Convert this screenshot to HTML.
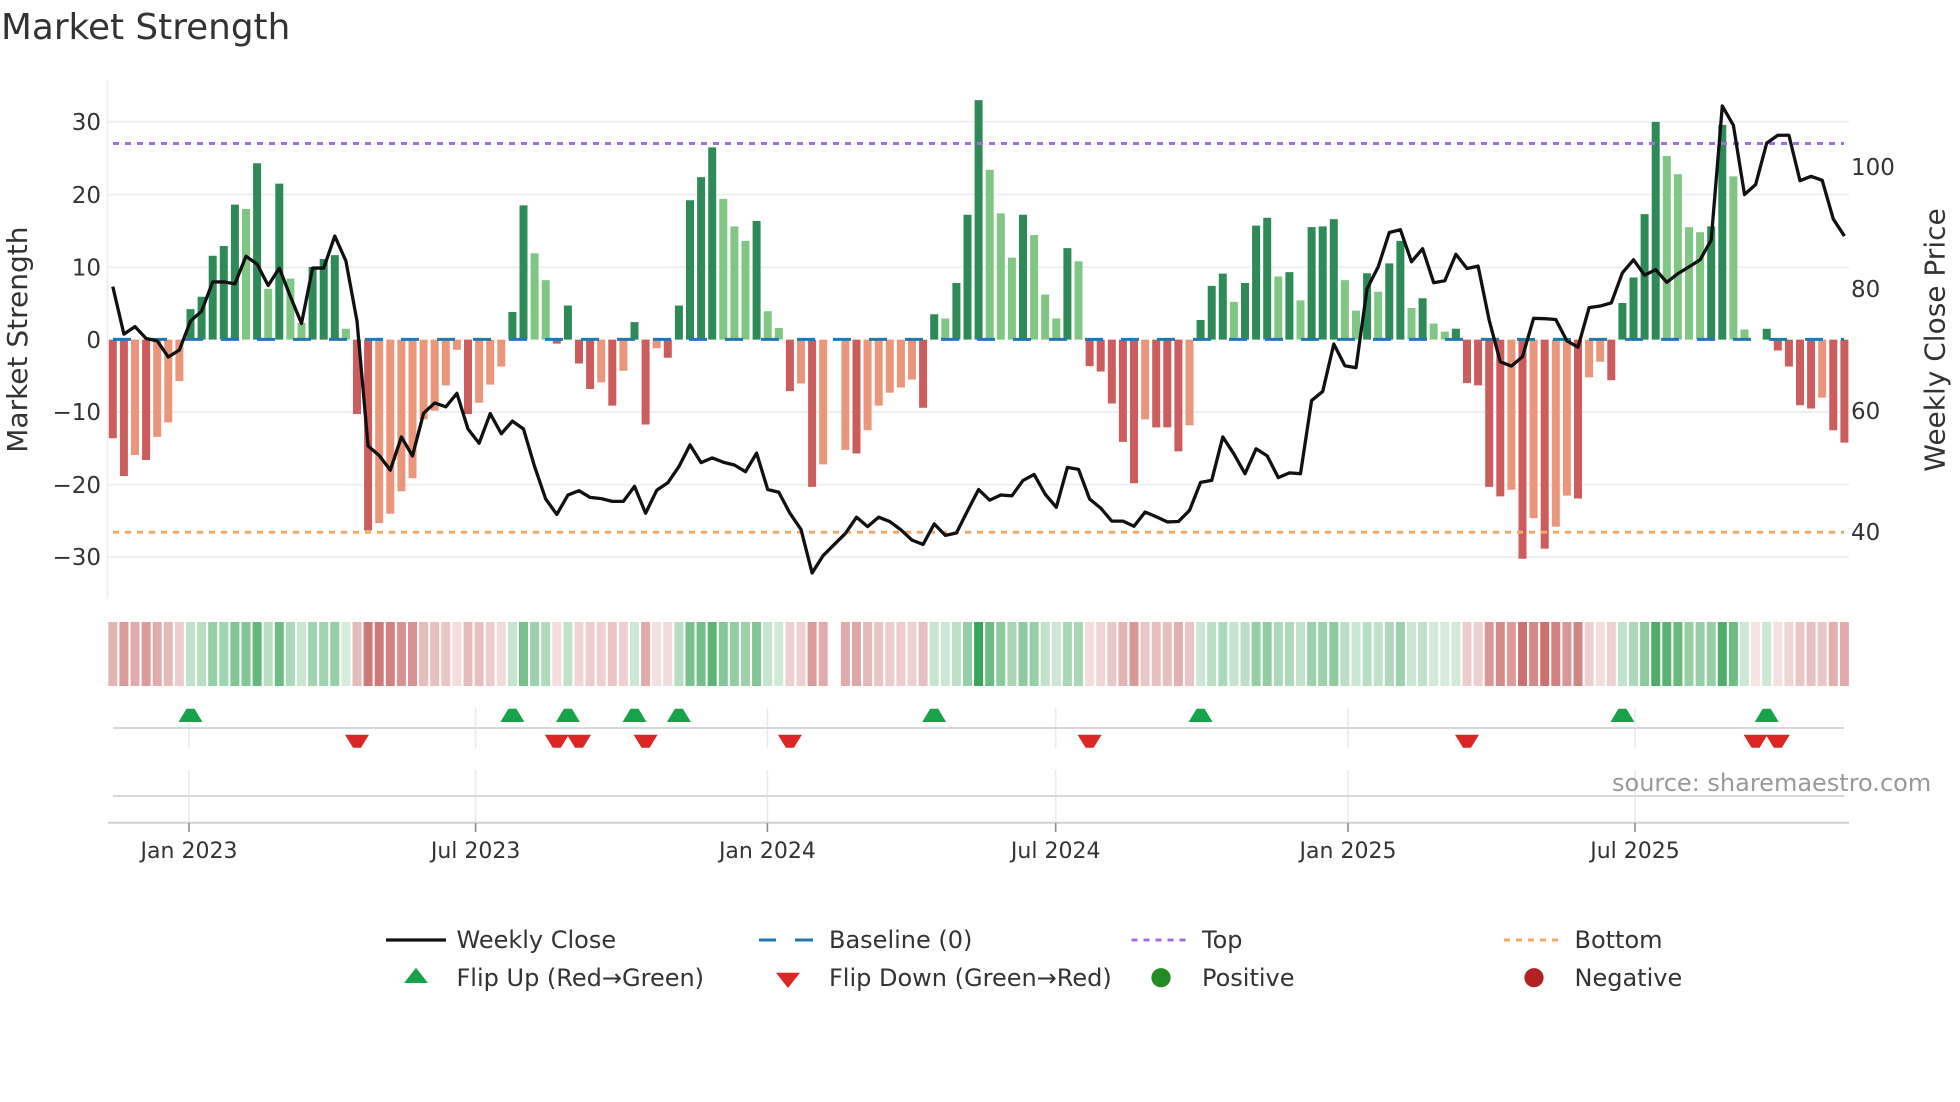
<!DOCTYPE html>
<html lang="en">
<head>
<meta charset="utf-8">
<title>Market Strength</title>
<style>
html,body{margin:0;padding:0;background:#fff;width:1960px;height:1102px;overflow:hidden}
svg{display:block;filter:blur(.35px)}
text{font-family:"DejaVu Sans","Liberation Sans",sans-serif;fill:#333}
.ns path,.ns{vector-effect:non-scaling-stroke}
.r{stroke:#bc4a46;stroke-opacity:.92;fill:none}
.g{stroke:#229a44;stroke-opacity:.94;fill:none}
.t{font-size:23px}
.x{font-size:22px;text-anchor:middle}
.l{font-size:24px}
</style>
</head>
<body>
<svg width="1960" height="1102" viewBox="0 0 1960 1102" xmlns="http://www.w3.org/2000/svg">
<rect width="1960" height="1102" fill="#fff"/>
<text x="1" y="39" style="font-size:35.8px">Market Strength</text>

<!-- main grid -->
<path d="M107.5 80V599" stroke="#eef0f3" stroke-width="2" fill="none"/>
<path d="M108 121.8H1849M108 194.5H1849M108 267.3H1849M108 412H1849M108 484.7H1849M108 557H1849" stroke="#eef0f4" stroke-width="2" fill="none"/>

<!-- bars -->
<g class="ns" transform="translate(112.8,339.6) scale(11.1,-7.256)" fill="none" stroke-width="8">
<path stroke="#2e8b57" d="M7 0V4.2M8 0V5.9M9 0V11.55M10 0V12.9M11 0V18.6M13 0V24.3M15 0V21.5M18 0V10M19 0V11.1M20 0V11.65M36 0V3.8M37 0V18.5M41 0V4.7M47 0V2.4M51 0V4.7M52 0V19.2M53 0V22.4M54 0V26.5M58 0V16.35M74 0V3.5M76 0V7.8M77 0V17.2M78 0V33M82 0V17.2M86 0V12.6M98 0V2.7M99 0V7.4M100 0V9.1M102 0V7.8M103 0V15.7M104 0V16.8M106 0V9.3M108 0V15.5M109 0V15.6M110 0V16.6M113 0V9.15M115 0V10.5M116 0V13.6M118 0V5.7M121 0V1.5M136 0V5.05M137 0V8.55M138 0V17.3M139 0V30M144 0V15.6M145 0V29.6M149 0V1.5"/>
<path stroke="#81c784" d="M12 0V18M14 0V7M16 0V8.4M17 0V2.3M21 0V1.5M38 0V11.9M39 0V8.2M55 0V19.4M56 0V15.6M57 0V13.6M59 0V3.9M60 0V1.6M75 0V2.9M79 0V23.4M80 0V17.4M81 0V11.3M83 0V14.4M84 0V6.2M85 0V2.9M87 0V10.8M101 0V5.2M105 0V8.7M107 0V5.4M111 0V8.2M112 0V4M114 0V6.6M117 0V4.35M119 0V2.2M120 0V1.1M140 0V25.3M141 0V22.8M142 0V15.5M143 0V14.8M146 0V22.5M147 0V1.4"/>
<path stroke="#cd5c5c" d="M0 0V-13.6M1 0V-18.8M3 0V-16.6M22 0V-10.25M23 0V-26.3M32 0V-10.25M40 0V-.55M42 0V-3.3M43 0V-6.8M45 0V-9.1M48 0V-11.7M50 0V-2.5M61 0V-7.1M63 0V-20.3M67 0V-15.7M73 0V-9.4M88 0V-3.65M89 0V-4.4M90 0V-8.8M91 0V-14.1M92 0V-19.8M94 0V-12.1M95 0V-12.1M96 0V-15.4M122 0V-6M123 0V-6.3M124 0V-20.3M125 0V-21.6M127 0V-30.2M129 0V-28.8M132 0V-21.9M135 0V-5.6M150 0V-1.5M151 0V-3.7M152 0V-9.05M153 0V-9.5M155 0V-12.5M156 0V-14.2"/>
<path stroke="#e9967a" d="M2 0V-15.9M4 0V-13.4M5 0V-11.4M6 0V-5.7M24 0V-25.3M25 0V-24M26 0V-20.9M27 0V-19.1M28 0V-11M29 0V-9.8M30 0V-6.3M31 0V-1.4M33 0V-8.7M34 0V-6.2M35 0V-3.7M44 0V-5.9M46 0V-4.3M49 0V-1.2M62 0V-6.05M64 0V-17.2M66 0V-15.2M68 0V-12.5M69 0V-9.1M70 0V-7.3M71 0V-6.6M72 0V-5.5M93 0V-11M97 0V-11.8M126 0V-20.7M128 0V-24.6M130 0V-25.8M131 0V-21.5M133 0V-5.2M134 0V-3.05M154 0V-8"/>
</g>

<!-- reference lines -->
<path d="M113 143.5H1844" stroke="#a36fe0" stroke-width="3" stroke-dasharray="6 6" fill="none"/>
<path d="M113 532.2H1844" stroke="#f2a868" stroke-width="3" stroke-dasharray="6 6" fill="none"/>
<path d="M113 339.4H1844" stroke="#2277ae" stroke-width="3" stroke-dasharray="18 18" fill="none"/>

<!-- price line -->
<g class="ns" transform="translate(112.8,0) scale(11.1,.3954)">
<path fill="none" stroke="#111" stroke-width="3.3" stroke-linejoin="round" d="M0 725L1 845 2 826 3 856 4 862 5 903 6 885 7 812 8 787 9 713 10 713 11 718 12 648 13 668 14 722 15 678 16 750 17 818 18 678 19 678 20 597 21 660 22 812 23 1128 24 1152 25 1189 26 1105 27 1153 28 1045 29 1019 30 1029 31 995 32 1085 33 1121 34 1046 35 1097 36 1065 37 1085 38 1180 39 1262 40 1301 41 1252 42 1241 43 1258 44 1261 45 1268 46 1268 47 1230 48 1298 49 1240 50 1221 51 1180 52 1125 53 1170 54 1158 55 1169 56 1176 57 1193 58 1146 59 1238 60 1245 61 1298 62 1339 63 1449 64 1405 65 1377 66 1349 67 1308 68 1332 69 1308 70 1319 71 1340 72 1366 73 1377 74 1325 75 1354 76 1348 77 1292 78 1238 79 1265 80 1252 81 1254 82 1215 83 1200 84 1250 85 1283 86 1182 87 1187 88 1262 89 1285 90 1318 91 1318 92 1331 93 1295 94 1307 95 1320 96 1319 97 1291 98 1220 99 1215 100 1105 101 1148 102 1198 103 1135 104 1153 105 1208 106 1196 107 1198 108 1013 109 990 110 870 111 925 112 930 113 730 114 675 115 588 116 581 117 662 118 629 119 715 120 710 121 643 122 679 123 673 124 810 125 915 126 926 127 902 128 805 129 806 130 808 131 862 132 878 133 778 134 774 135 766 136 690 137 657 138 696 139 682 140 714 141 692 142 675 143 657 144 607 145 268 146 317 147 492 148 467 149 362 150 342 151 342 152 457 153 446 154 456 155 554 156 597"/>
</g>

<!-- y ticks -->
<g class="t" text-anchor="end">
<text x="101" y="130">30</text>
<text x="101" y="203">20</text>
<text x="101" y="275.5">10</text>
<text x="101" y="348">0</text>
<text x="101" y="420">−10</text>
<text x="101" y="493">−20</text>
<text x="101" y="565">−30</text>
</g>
<g class="t">
<text x="1851" y="175">100</text>
<text x="1851" y="297">80</text>
<text x="1851" y="419">60</text>
<text x="1851" y="540">40</text>
</g>
<text transform="translate(27,339.6) rotate(-90)" text-anchor="middle" style="font-size:28px">Market Strength</text>
<text transform="translate(1944.5,340) rotate(-90)" text-anchor="middle" style="font-size:28px">Weekly Close Price</text>

<!-- heat strip -->
<g class="ns" transform="translate(112.8,622) scale(11.1,64)" stroke-width="9" fill="none">
<path class="r" opacity=".45" d="M0 0V1"/><path class="r" opacity=".6" d="M1 0V1"/><path class="r" opacity=".5" d="M2 0V1"/><path class="r" opacity=".6" d="M3 0V1"/><path class="r" opacity=".5" d="M4 0V1"/><path class="r" opacity=".42" d="M5 0V1"/><path class="r" opacity=".3" d="M6 0V1"/>
<path class="g" opacity=".3" d="M7 0V1"/><path class="g" opacity=".35" d="M8 0V1"/><path class="g" opacity=".5" d="M9 0V1"/><path class="g" opacity=".45" d="M10 0V1"/><path class="g" opacity=".6" d="M11 0V1"/><path class="g" opacity=".6" d="M12 0V1"/><path class="g" opacity=".75" d="M13 0V1"/><path class="g" opacity=".35" d="M14 0V1"/><path class="g" opacity=".7" d="M15 0V1"/><path class="g" opacity=".4" d="M16 0V1"/><path class="g" opacity=".25" d="M17 0V1"/><path class="g" opacity=".45" d="M18 0V1"/><path class="g" opacity=".45" d="M19 0V1"/><path class="g" opacity=".5" d="M20 0V1"/><path class="g" opacity=".2" d="M21 0V1"/>
<path class="r" opacity=".4" d="M22 0V1"/><path class="r" opacity=".8" d="M23 0V1"/><path class="r" opacity=".8" d="M24 0V1"/><path class="r" opacity=".75" d="M25 0V1"/><path class="r" opacity=".65" d="M26 0V1"/><path class="r" opacity=".65" d="M27 0V1"/><path class="r" opacity=".4" d="M28 0V1"/><path class="r" opacity=".38" d="M29 0V1"/><path class="r" opacity=".33" d="M30 0V1"/><path class="r" opacity=".2" d="M31 0V1"/><path class="r" opacity=".4" d="M32 0V1"/><path class="r" opacity=".38" d="M33 0V1"/><path class="r" opacity=".3" d="M34 0V1"/><path class="r" opacity=".22" d="M35 0V1"/>
<path class="g" opacity=".28" d="M36 0V1"/><path class="g" opacity=".65" d="M37 0V1"/><path class="g" opacity=".48" d="M38 0V1"/><path class="g" opacity=".38" d="M39 0V1"/><path class="r" opacity=".2" d="M40 0V1"/><path class="g" opacity=".3" d="M41 0V1"/><path class="r" opacity=".25" d="M42 0V1"/><path class="r" opacity=".3" d="M43 0V1"/><path class="r" opacity=".28" d="M44 0V1"/><path class="r" opacity=".35" d="M45 0V1"/><path class="r" opacity=".28" d="M46 0V1"/><path class="g" opacity=".24" d="M47 0V1"/><path class="r" opacity=".5" d="M48 0V1"/><path class="r" opacity=".18" d="M49 0V1"/><path class="r" opacity=".22" d="M50 0V1"/>
<path class="g" opacity=".35" d="M51 0V1"/><path class="g" opacity=".65" d="M52 0V1"/><path class="g" opacity=".68" d="M53 0V1"/><path class="g" opacity=".78" d="M54 0V1"/><path class="g" opacity=".58" d="M55 0V1"/><path class="g" opacity=".52" d="M56 0V1"/><path class="g" opacity=".48" d="M57 0V1"/><path class="g" opacity=".6" d="M58 0V1"/><path class="g" opacity=".28" d="M59 0V1"/><path class="g" opacity=".22" d="M60 0V1"/>
<path class="r" opacity=".28" d="M61 0V1"/><path class="r" opacity=".28" d="M62 0V1"/><path class="r" opacity=".6" d="M63 0V1"/><path class="r" opacity=".5" d="M64 0V1"/><path class="r" opacity=".5" d="M66 0V1"/><path class="r" opacity=".52" d="M67 0V1"/><path class="r" opacity=".42" d="M68 0V1"/><path class="r" opacity=".35" d="M69 0V1"/><path class="r" opacity=".3" d="M70 0V1"/><path class="r" opacity=".3" d="M71 0V1"/><path class="r" opacity=".28" d="M72 0V1"/><path class="r" opacity=".38" d="M73 0V1"/>
<path class="g" opacity=".28" d="M74 0V1"/><path class="g" opacity=".24" d="M75 0V1"/><path class="g" opacity=".32" d="M76 0V1"/><path class="g" opacity=".5" d="M77 0V1"/><path class="g" opacity=".95" d="M78 0V1"/><path class="g" opacity=".7" d="M79 0V1"/><path class="g" opacity=".55" d="M80 0V1"/><path class="g" opacity=".42" d="M81 0V1"/><path class="g" opacity=".55" d="M82 0V1"/><path class="g" opacity=".5" d="M83 0V1"/><path class="g" opacity=".3" d="M84 0V1"/><path class="g" opacity=".24" d="M85 0V1"/><path class="g" opacity=".42" d="M86 0V1"/><path class="g" opacity=".42" d="M87 0V1"/>
<path class="r" opacity=".2" d="M88 0V1"/><path class="r" opacity=".25" d="M89 0V1"/><path class="r" opacity=".33" d="M90 0V1"/><path class="r" opacity=".45" d="M91 0V1"/><path class="r" opacity=".62" d="M92 0V1"/><path class="r" opacity=".33" d="M93 0V1"/><path class="r" opacity=".38" d="M94 0V1"/><path class="r" opacity=".38" d="M95 0V1"/><path class="r" opacity=".48" d="M96 0V1"/><path class="r" opacity=".35" d="M97 0V1"/>
<path class="g" opacity=".24" d="M98 0V1"/><path class="g" opacity=".33" d="M99 0V1"/><path class="g" opacity=".4" d="M100 0V1"/><path class="g" opacity=".28" d="M101 0V1"/><path class="g" opacity=".33" d="M102 0V1"/><path class="g" opacity=".5" d="M103 0V1"/><path class="g" opacity=".52" d="M104 0V1"/><path class="g" opacity=".4" d="M105 0V1"/><path class="g" opacity=".4" d="M106 0V1"/><path class="g" opacity=".3" d="M107 0V1"/><path class="g" opacity=".48" d="M108 0V1"/><path class="g" opacity=".48" d="M109 0V1"/><path class="g" opacity=".55" d="M110 0V1"/><path class="g" opacity=".33" d="M111 0V1"/><path class="g" opacity=".26" d="M112 0V1"/><path class="g" opacity=".35" d="M113 0V1"/><path class="g" opacity=".3" d="M114 0V1"/><path class="g" opacity=".4" d="M115 0V1"/><path class="g" opacity=".48" d="M116 0V1"/><path class="g" opacity=".26" d="M117 0V1"/><path class="g" opacity=".3" d="M118 0V1"/><path class="g" opacity=".22" d="M119 0V1"/><path class="g" opacity=".2" d="M120 0V1"/><path class="g" opacity=".22" d="M121 0V1"/>
<path class="r" opacity=".3" d="M122 0V1"/><path class="r" opacity=".28" d="M123 0V1"/><path class="r" opacity=".62" d="M124 0V1"/><path class="r" opacity=".7" d="M125 0V1"/><path class="r" opacity=".6" d="M126 0V1"/><path class="r" opacity=".85" d="M127 0V1"/><path class="r" opacity=".7" d="M128 0V1"/><path class="r" opacity=".85" d="M129 0V1"/><path class="r" opacity=".75" d="M130 0V1"/><path class="r" opacity=".62" d="M131 0V1"/><path class="r" opacity=".72" d="M132 0V1"/><path class="r" opacity=".28" d="M133 0V1"/><path class="r" opacity=".2" d="M134 0V1"/><path class="r" opacity=".28" d="M135 0V1"/>
<path class="g" opacity=".3" d="M136 0V1"/><path class="g" opacity=".4" d="M137 0V1"/><path class="g" opacity=".55" d="M138 0V1"/><path class="g" opacity=".85" d="M139 0V1"/><path class="g" opacity=".8" d="M140 0V1"/><path class="g" opacity=".72" d="M141 0V1"/><path class="g" opacity=".5" d="M142 0V1"/><path class="g" opacity=".5" d="M143 0V1"/><path class="g" opacity=".5" d="M144 0V1"/><path class="g" opacity=".85" d="M145 0V1"/><path class="g" opacity=".7" d="M146 0V1"/><path class="g" opacity=".24" d="M147 0V1"/><path class="r" opacity=".16" d="M148 0V1"/><path class="g" opacity=".24" d="M149 0V1"/>
<path class="r" opacity=".18" d="M150 0V1"/><path class="r" opacity=".25" d="M151 0V1"/><path class="r" opacity=".35" d="M152 0V1"/><path class="r" opacity=".38" d="M153 0V1"/><path class="r" opacity=".33" d="M154 0V1"/><path class="r" opacity=".48" d="M155 0V1"/><path class="r" opacity=".5" d="M156 0V1"/>
</g>

<!-- lower panels -->
<path d="M189 708V748M189 770V823M475.6 708V748M475.6 770V823M767.4 708V748M767.4 770V823M1055.7 708V748M1055.7 770V823M1348 708V748M1348 770V823M1635 708V748M1635 770V823" stroke="#eaebef" stroke-width="1.6" fill="none"/>
<path d="M113 728H1844M113 796H1844" stroke="#d6d8dc" stroke-width="2" fill="none"/>
<path d="M108 822.7H1849" stroke="#cfd0d3" stroke-width="2" fill="none"/>
<path d="M189 823V832M475.6 823V832M767.4 823V832M1055.7 823V832M1348 823V832M1635 823V832" stroke="#8d8d8d" stroke-width="1.6" fill="none"/>

<path fill="#16a34a" d="M178.5 722l8-13.3h8l8 13.3zM500.4 722l8-13.3h8l8 13.3zM555.9 722l8-13.3h8l8 13.3zM622.5 722l8-13.3h8l8 13.3zM666.9 722l8-13.3h8l8 13.3zM922.2 722l8-13.3h8l8 13.3zM1188.6 722l8-13.3h8l8 13.3zM1610.4 722l8-13.3h8l8 13.3zM1754.7 722l8-13.3h8l8 13.3z"/>
<path fill="#dc2626" d="M345 734.7h24l-8 13h-8zM544.8 734.7h24l-8 13h-8zM567 734.7h24l-8 13h-8zM633.6 734.7h24l-8 13h-8zM777.9 734.7h24l-8 13h-8zM1077.6 734.7h24l-8 13h-8zM1455 734.7h24l-8 13h-8zM1743.6 734.7h24l-8 13h-8zM1765.8 734.7h24l-8 13h-8z"/>

<g class="x">
<text x="189" y="858">Jan 2023</text>
<text x="475.6" y="858">Jul 2023</text>
<text x="767.4" y="858">Jan 2024</text>
<text x="1055.7" y="858">Jul 2024</text>
<text x="1348" y="858">Jan 2025</text>
<text x="1635" y="858">Jul 2025</text>
</g>
<text x="1620" y="796" style="font-size:24px;fill:#999" transform="translate(-8,-5)">source: sharemaestro.com</text>

<!-- legend -->
<path d="M386 940H446" stroke="#111" stroke-width="3.3" fill="none"/>
<path d="M759 940H776M795 940H813" stroke="#2277ae" stroke-width="3" fill="none"/>
<path d="M1131.5 940H1186" stroke="#a36fe0" stroke-width="3" stroke-dasharray="6 6" fill="none"/>
<path d="M1504 940H1559" stroke="#f2a868" stroke-width="3" stroke-dasharray="6 6" fill="none"/>
<path d="M404 983L416 967.7 428 983z" fill="#16a34a"/>
<path d="M776 972.7H800L788 988z" fill="#dc2626"/>
<circle cx="1161" cy="977.7" r="9.6" fill="#228b22"/>
<circle cx="1534" cy="977.7" r="9.6" fill="#b22222"/>
<g class="l">
<text x="456.5" y="948">Weekly Close</text>
<text x="829" y="948">Baseline (0)</text>
<text x="1202" y="948">Top</text>
<text x="1574.5" y="948">Bottom</text>
<text x="456.5" y="986">Flip Up (Red→Green)</text>
<text x="829" y="986">Flip Down (Green→Red)</text>
<text x="1202" y="986">Positive</text>
<text x="1574.5" y="986">Negative</text>
</g>
</svg>
</body>
</html>
